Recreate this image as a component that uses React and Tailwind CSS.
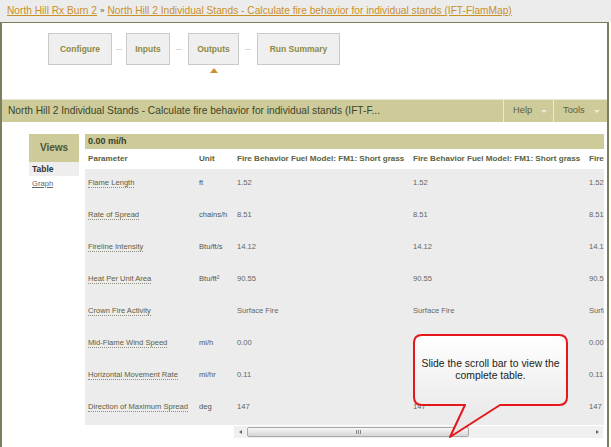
import React from 'react';

const steps = [
  { label: 'Configure', w: 'w-[64px]' },
  { label: 'Inputs', w: 'w-[44px]' },
  { label: 'Outputs', w: 'w-[51px]', active: true },
  { label: 'Run Summary', w: 'w-[83px]' },
];

const rows = [
  { name: 'Flame Length', unit: 'ft', value: '1.52' },
  { name: 'Rate of Spread', unit: 'chains/h', value: '8.51' },
  { name: 'Fireline Intensity', unit: 'Btu/ft/s', value: '14.12' },
  { name: 'Heat Per Unit Area', unit: 'Btu/ft²', value: '90.55' },
  { name: 'Crown Fire Activity', unit: '', value: 'Surface Fire' },
  { name: 'Mid-Flame Wind Speed', unit: 'mi/h', value: '0.00' },
  { name: 'Horizontal Movement Rate', unit: 'mi/hr', value: '0.11' },
  { name: 'Direction of Maximum Spread', unit: 'deg', value: '147' },
];

const fmHeader = 'Fire Behavior Fuel Model: FM1: Short grass';

function Step({ label, w, active }) {
  return (
    <div className="relative">
      <div className={`${w} h-[32px] flex items-center justify-center bg-[#efefef] border border-[#c9c9c9] text-[8.5px] font-bold text-[#8c8a45]`}>
        {label}
      </div>
      {active && (
        <div className="absolute left-1/2 -translate-x-1/2 top-[35px] w-0 h-0 border-l-[4px] border-r-[4px] border-b-[5px] border-l-transparent border-r-transparent border-b-[#c9922c]" />
      )}
    </div>
  );
}

function Callout() {
  return (
    <div className="absolute left-[412px] top-[333px] w-[160px] h-[108px]">
      <svg width="160" height="108" viewBox="0 0 160 108" className="absolute inset-0">
        <defs>
          <linearGradient id="bubble" x1="0" y1="0" x2="0" y2="1">
            <stop offset="0" stopColor="#ffffff" />
            <stop offset="1" stopColor="#e4e4e4" />
          </linearGradient>
        </defs>
        <path
          d="M10,2 H147 Q155,2 155,10 V64 Q155,72 147,72 H88 L38,104 L53,72 H10 Q2,72 2,64 V10 Q2,2 10,2 Z"
          fill="url(#bubble)"
          stroke="#e3171c"
          strokeWidth="2"
          strokeLinejoin="round"
        />
      </svg>
      <div className="absolute left-[2px] top-[2px] w-[153px] h-[70px] flex items-center justify-center text-center text-[10.4px] leading-[12px] text-[#222]">
        Slide the scroll bar to view the<br />complete table.
      </div>
    </div>
  );
}

export default function App() {
  return (
    <div className="relative w-[611px] h-[447px] overflow-hidden bg-white font-['Liberation_Sans',Arial,sans-serif]">
      {/* breadcrumb */}
      <div className="h-[22px] bg-[#ececec] px-[7px] flex items-center text-[10.2px] whitespace-nowrap">
        <span className="text-[#c9902a] underline">North Hill Rx Burn 2</span>
        <span className="text-[#555] text-[8px] mx-[3px]">»</span>
        <span className="text-[#c9902a] underline">North Hill 2 Individual Stands - Calculate fire behavior for individual stands (IFT-FlamMap)</span>
      </div>

      <div className="w-[609px] h-[425px] border-l-2 border-r-2 border-t border-[#7b805c] overflow-hidden">
        {/* steps */}
        <div className="h-[76px] pl-[46px] pt-[10px] flex items-start">
          {steps.map((s, i) => (
            <React.Fragment key={s.label}>
              {i > 0 && (
                <div className={`h-[32px] flex items-center justify-center ${i === 1 ? 'w-[14px]' : 'w-[18px]'}`}>
                  <div className="w-[6px] h-px bg-[#d6d6d6]" />
                </div>
              )}
              <Step {...s} />
            </React.Fragment>
          ))}
        </div>

        {/* title bar */}
        <div className="h-[23px] bg-[#cecb9b] border-t border-[#e8e6cf] flex items-center">
          <div className="flex-1 pl-[6px] text-[10.2px] text-[#3d4526] whitespace-nowrap overflow-hidden">
            North Hill 2 Individual Stands - Calculate fire behavior for individual stands (IFT-F...
          </div>
          <div className="w-[50px] h-full border-l border-[#ebe9d3] flex items-center pl-[9px] gap-[9px] text-[9.3px] text-[#5b6141]">
            Help
            <span className="w-0 h-0 border-l-[3px] border-r-[3px] border-t-[3px] border-l-transparent border-r-transparent border-t-[#ecebd6]" />
          </div>
          <div className="w-[54px] h-full border-l border-[#ebe9d3] flex items-center pl-[9px] gap-[9px] text-[9.3px] text-[#5b6141]">
            Tools
            <span className="w-0 h-0 border-l-[3px] border-r-[3px] border-t-[3px] border-l-transparent border-r-transparent border-t-[#ecebd6]" />
          </div>
        </div>

        {/* content */}
        <div className="pl-[27px] pt-[12px] flex gap-[6px]">
          {/* views */}
          <div className="w-[50px]">
            <div className="h-[28px] bg-[#cecb9b] pt-[6px] text-center text-[10px] font-bold text-[#4d5535]">Views</div>
            <div className="h-[14px] bg-[#eeeeee] pl-[3px] flex items-center text-[8.5px] font-bold text-[#333]">Table</div>
            <div className="pl-[3px] pt-[2px] text-[7.6px] text-[#666]">
              <span className="underline">Graph</span>
            </div>
          </div>

          {/* table */}
          <div className="w-[519px]">
            <div className="h-[15px] bg-[#cecb9b] pl-[3px] flex items-center text-[9px] font-bold text-[#3a3f28]">0.00 mi/h</div>
            <div className="h-[20px] pt-[1px] flex items-center text-[8.1px] font-bold text-[#595f3f] whitespace-nowrap overflow-hidden">
              <div className="w-[110px] shrink-0 pl-[3px]">Parameter</div>
              <div className="w-[39px] shrink-0 pl-[4px]">Unit</div>
              <div className="w-[176px] shrink-0 pl-[3px]">{fmHeader}</div>
              <div className="w-[176px] shrink-0 pl-[3px]">{fmHeader}</div>
              <div className="w-[176px] shrink-0 pl-[3px]">{fmHeader}</div>
            </div>
            <div className="bg-[#ececec]">
              {rows.map((r) => (
                <div key={r.name} className="h-[32px] flex items-start pt-[9px] text-[7.6px] leading-[10px] whitespace-nowrap overflow-hidden">
                  <div className="w-[110px] shrink-0 pl-[3px]">
                    <span className="text-[#5d5d3e] border-b border-dotted border-[#8f8f80]">{r.name}</span>
                  </div>
                  <div className="w-[39px] shrink-0 pl-[4px] text-[#555]">{r.unit}</div>
                  <div className="w-[176px] shrink-0 pl-[3px] text-[#666]">{r.value}</div>
                  <div className="w-[176px] shrink-0 pl-[3px] text-[#666]">{r.value}</div>
                  <div className="w-[176px] shrink-0 pl-[3px] text-[#666]">{r.value}</div>
                </div>
              ))}
            </div>
            {/* scrollbar */}
            <div className="ml-[149px] w-[369px] h-[12px] mt-[1px] bg-[#f0f0f0] flex items-center">
              <span className="w-[12px] flex justify-center">
                <span className="w-0 h-0 border-t-[2.5px] border-b-[2.5px] border-r-[3px] border-t-transparent border-b-transparent border-r-[#666]" />
              </span>
              <div className="ml-[1px] w-[222px] h-[10px] rounded-[2px] border border-[#a9a9a9] bg-gradient-to-b from-[#f7f7f7] to-[#d6d6d6] flex items-center justify-center gap-[1px]">
                <span className="w-px h-[4px] bg-[#888]" />
                <span className="w-px h-[4px] bg-[#888]" />
                <span className="w-px h-[4px] bg-[#888]" />
              </div>
              <div className="flex-1" />
              <span className="w-[12px] flex justify-center">
                <span className="w-0 h-0 border-t-[2.5px] border-b-[2.5px] border-l-[3px] border-t-transparent border-b-transparent border-l-[#666]" />
              </span>
            </div>
          </div>
        </div>
      </div>

      <Callout />
    </div>
  );
}
